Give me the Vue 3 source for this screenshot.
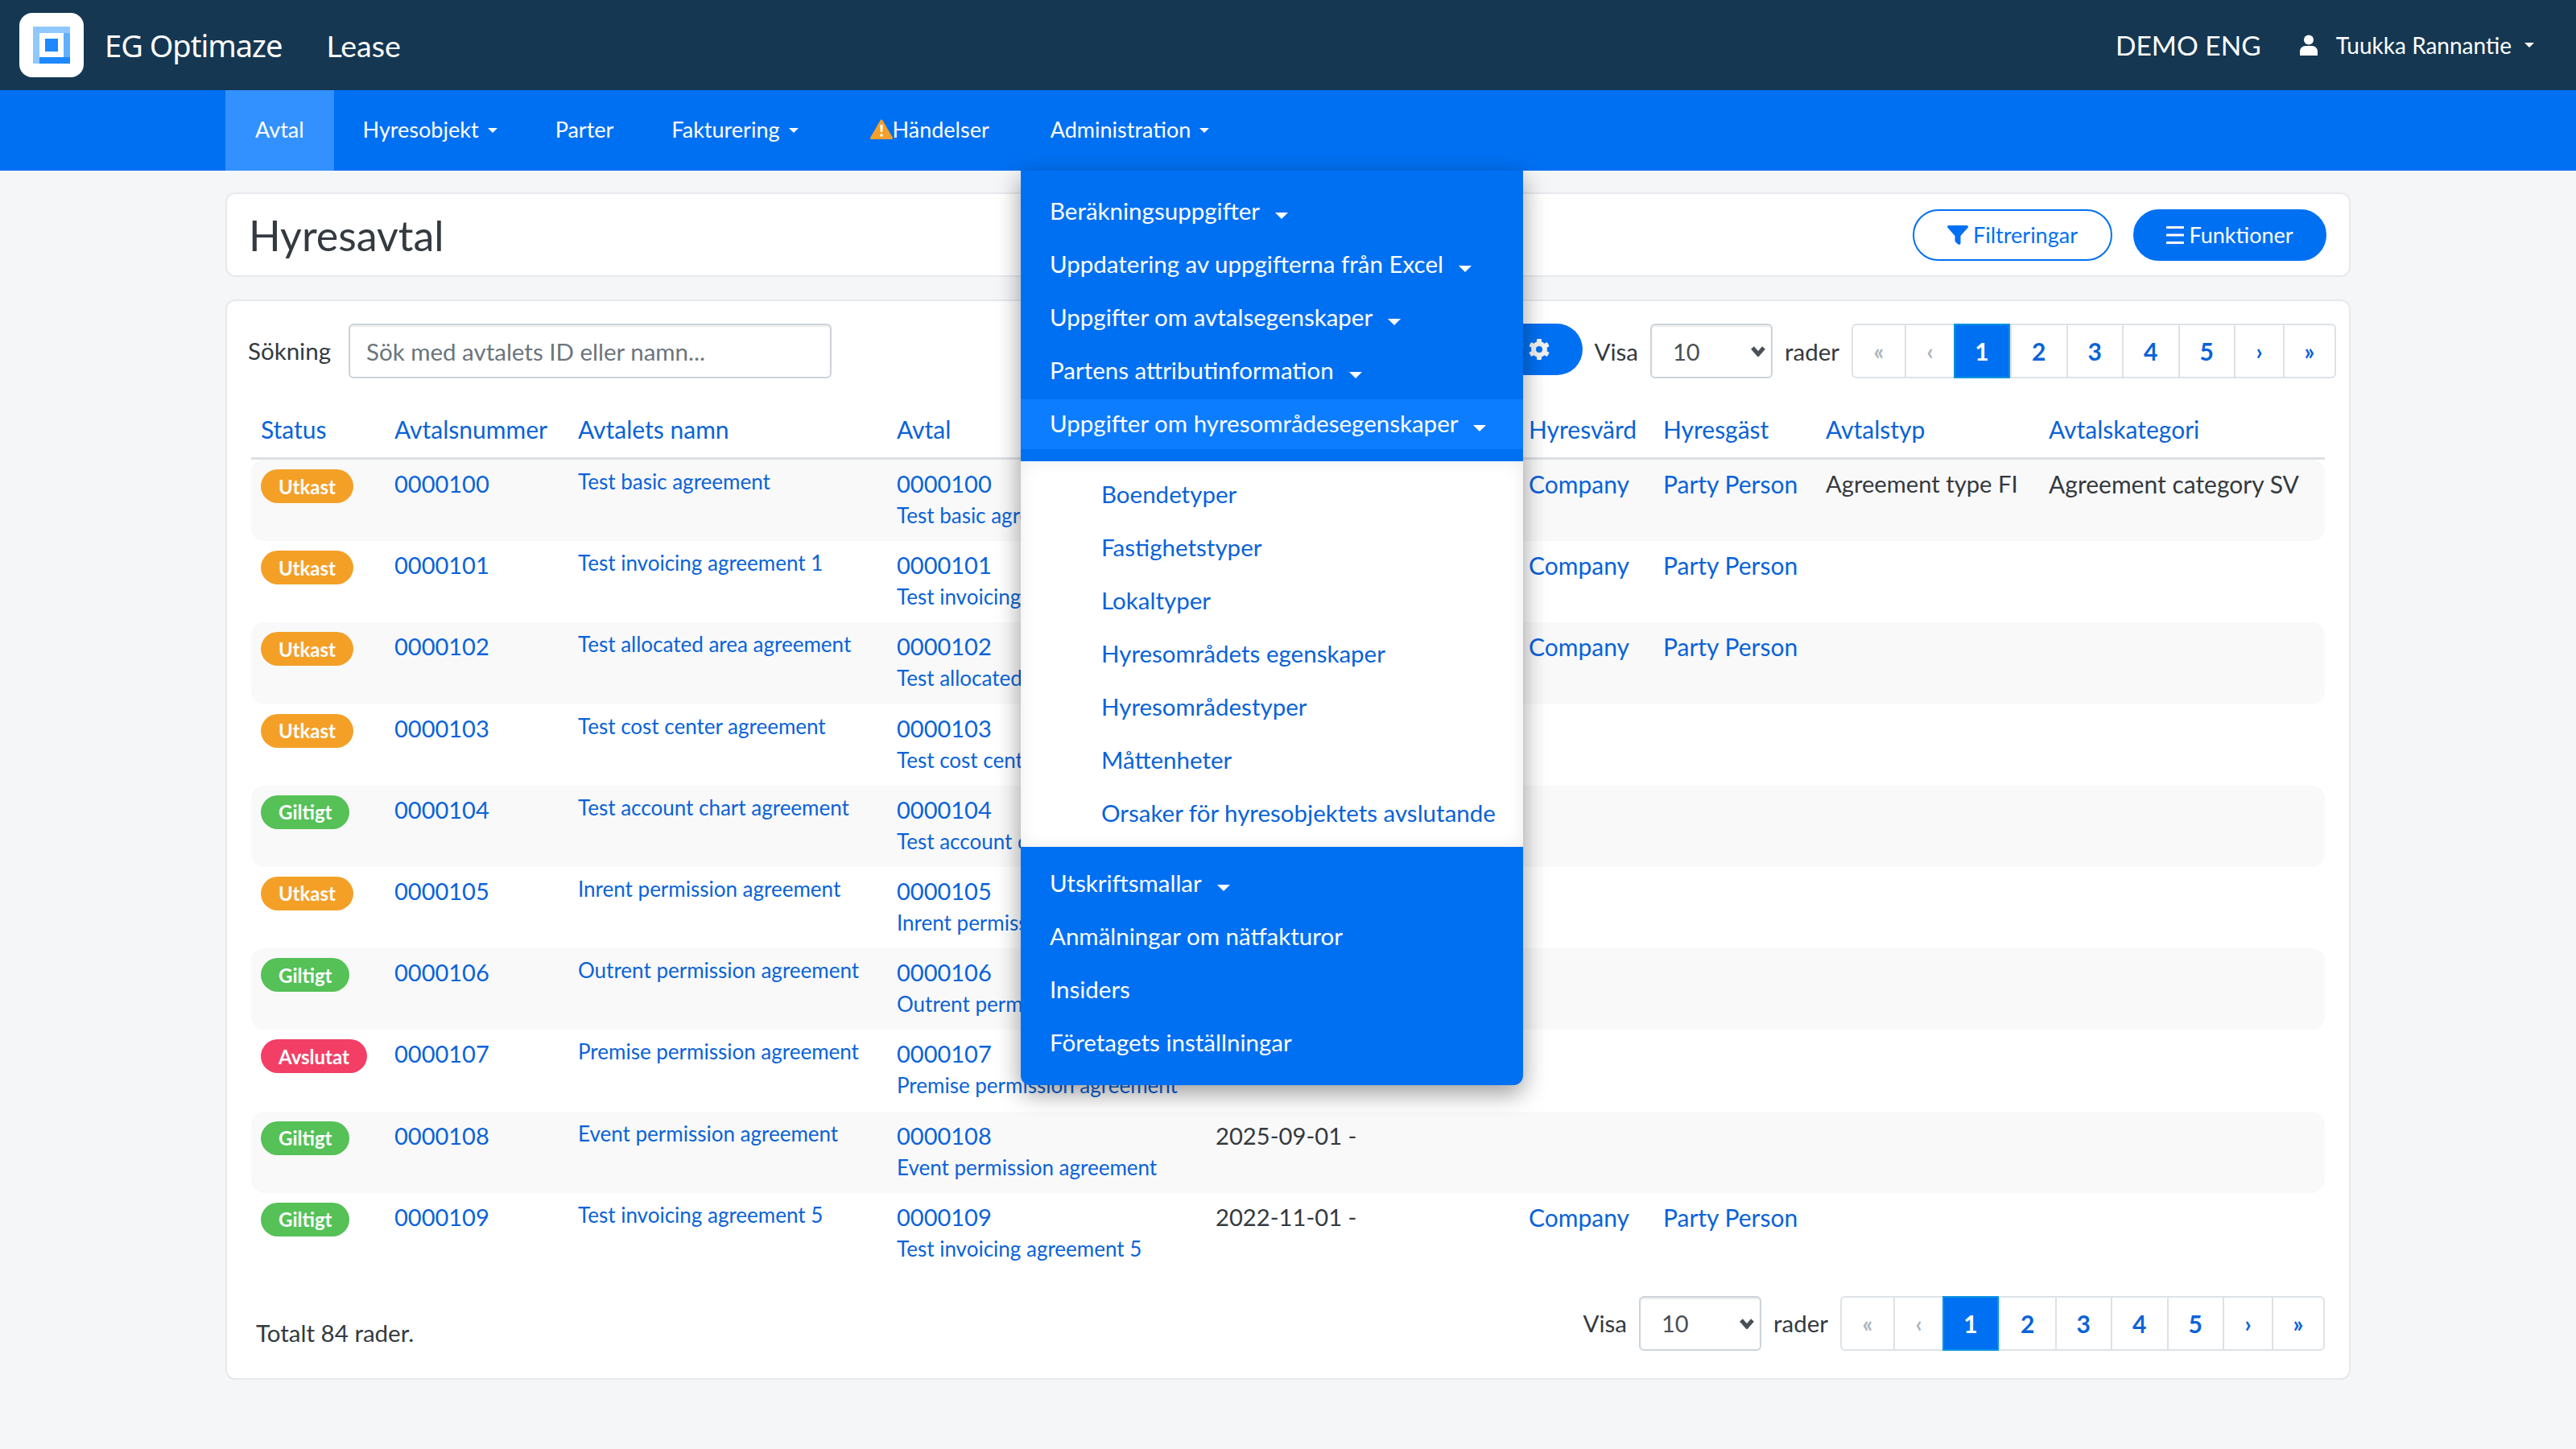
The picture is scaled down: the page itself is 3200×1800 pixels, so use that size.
<script setup>
const navItems = [
  { label: 'Avtal', active: true },
  { label: 'Hyresobjekt', caret: true },
  { label: 'Parter' },
  { label: 'Fakturering', caret: true },
  { label: 'Händelser', warn: true },
  { label: 'Administration', caret: true }
]

const adminTop = [
  'Beräkningsuppgifter',
  'Uppdatering av uppgifterna från Excel',
  'Uppgifter om avtalsegenskaper',
  'Partens attributinformation'
]
const subItems = [
  'Boendetyper',
  'Fastighetstyper',
  'Lokaltyper',
  'Hyresområdets egenskaper',
  'Hyresområdestyper',
  'Måttenheter',
  'Orsaker för hyresobjektets avslutande'
]

const rows = [
  { status: 'Utkast', no: '0000100', name: 'Test basic agreement', company: true, type: 'Agreement type FI', cat: 'Agreement category SV' },
  { status: 'Utkast', no: '0000101', name: 'Test invoicing agreement 1', company: true },
  { status: 'Utkast', no: '0000102', name: 'Test allocated area agreement', company: true },
  { status: 'Utkast', no: '0000103', name: 'Test cost center agreement' },
  { status: 'Giltigt', no: '0000104', name: 'Test account chart agreement' },
  { status: 'Utkast', no: '0000105', name: 'Inrent permission agreement' },
  { status: 'Giltigt', no: '0000106', name: 'Outrent permission agreement' },
  { status: 'Avslutat', no: '0000107', name: 'Premise permission agreement' },
  { status: 'Giltigt', no: '0000108', name: 'Event permission agreement', date: '2025-09-01 -' },
  { status: 'Giltigt', no: '0000109', name: 'Test invoicing agreement 5', date: '2022-11-01 -', company: true }
]

const pages = ['«', '‹', '1', '2', '3', '4', '5', '›', '»']
</script>

<template>
  <div class="page">
    <header class="topbar">
      <div class="logo">
        <svg width="48" height="48" viewBox="0 0 48 48">
          <rect x="1" y="1" width="46" height="46" fill="#8fc7ff" />
          <rect x="9" y="9" width="30" height="30" fill="#fff" />
          <rect x="39" y="9" width="8" height="30" fill="#5fb0ff" />
          <rect x="9" y="39" width="38" height="8" fill="#1e88ff" />
          <rect x="16" y="16" width="16" height="16" fill="#1e88ff" />
        </svg>
      </div>
      <span class="brand">EG Optimaze</span>
      <span class="module">Lease</span>
      <span class="tenant">DEMO ENG</span>
      <svg class="user-icon" width="24" height="26" viewBox="0 0 24 26">
        <circle cx="12" cy="6.500" r="6" fill="#fff" />
        <path d="M1 26v-5c0-4 3-7 7-7h8c4 0 7 3 7 7v5z" fill="#fff" />
      </svg>
      <span class="user">Tuukka Rannantie</span>
      <i class="caret small user-caret"></i>
    </header>

    <nav class="navbar">
      <a v-for="item in navItems" :key="item.label" class="nav-item" :class="{ active: item.active, warned: item.warn }">
        <svg v-if="item.warn" width="28" height="25" viewBox="0 0 28 25">
          <path d="M14 2 L26.500 23.500 H1.500 Z" fill="#f4a02a" stroke="#f4a02a" stroke-width="3" stroke-linejoin="round" />
          <path d="M12.300 7h3.400l-.5 9h-2.400z" fill="#fff" />
          <circle cx="14" cy="20" r="1.800" fill="#fff" />
        </svg>
        {{ item.label }}
        <i v-if="item.caret" class="caret small"></i>
      </a>
    </nav>

    <main class="content">
      <section class="card title-card">
        <h1>Hyresavtal</h1>
        <div class="title-actions">
          <button class="pill outline">
            <svg width="26" height="24" viewBox="0 0 26 24">
              <path d="M2 0h22c1.800 0 2.500 1.800 1.400 3L16.500 13v9c0 1.600-1.800 2.500-3 1.500l-3-2.500c-.6-.5-1-1.200-1-2v-6L.6 3C-.5 1.800.2 0 2 0z" fill="#0070f2" />
            </svg>
            Filtreringar
          </button>
          <button class="pill solid">
            <svg width="22" height="22" viewBox="0 0 22 22">
              <path d="M1 1.500h20M1 11h20M1 20.500h20" stroke="#fff" stroke-width="3" stroke-linecap="round" />
            </svg>
            Funktioner
          </button>
        </div>
      </section>

      <section class="card list-card">
        <div class="toolbar">
          <label class="search-label">Sökning</label>
          <input class="search" placeholder="Sök med avtalets ID eller namn..." />
          <button class="gear-btn">
            <svg width="26" height="26" viewBox="0 0 26 26">
              <circle cx="13" cy="13" r="7" fill="none" stroke="#f2f2f2" stroke-width="6" />
              <g fill="#f2f2f2">
                <rect x="10" y="0" width="6" height="6" rx="1" />
                <rect x="10" y="0" width="6" height="6" rx="1" transform="rotate(60 13 13)" />
                <rect x="10" y="0" width="6" height="6" rx="1" transform="rotate(120 13 13)" />
                <rect x="10" y="0" width="6" height="6" rx="1" transform="rotate(180 13 13)" />
                <rect x="10" y="0" width="6" height="6" rx="1" transform="rotate(240 13 13)" />
                <rect x="10" y="0" width="6" height="6" rx="1" transform="rotate(300 13 13)" />
              </g>
            </svg>
          </button>
          <span class="rows-label">Visa</span>
          <select class="rows-select"><option>10</option></select>
          <span class="rows-label">rader</span>
          <ul class="pager">
            <li v-for="(p, i) in pages" :key="i" :class="{ on: p === '1', off: i < 2, outer: i === 0 || i === 8, inner: i === 1 || i === 7 }">{{ p }}</li>
          </ul>
        </div>

        <table class="grid">
          <colgroup>
            <col style="width: 166px" /><col style="width: 228px" /><col style="width: 396px" /><col style="width: 396px" />
            <col style="width: 389px" /><col style="width: 167px" /><col style="width: 202px" /><col style="width: 277px" /><col />
          </colgroup>
          <thead>
            <tr>
              <th>Status</th><th>Avtalsnummer</th><th>Avtalets namn</th><th>Avtal</th><th></th>
              <th>Hyresvärd</th><th>Hyresgäst</th><th>Avtalstyp</th><th>Avtalskategori</th>
            </tr>
          </thead>
          <tbody>
            <tr v-for="row in rows" :key="row.no">
              <td><span class="badge" :class="row.status.toLowerCase()">{{ row.status }}</span></td>
              <td><a class="num">{{ row.no }}</a></td>
              <td><a class="name">{{ row.name }}</a></td>
              <td class="contract">
                <a class="num">{{ row.no }}</a>
                <a class="name sub">{{ row.name }}</a>
              </td>
              <td class="plain">{{ row.date }}</td>
              <td><a v-if="row.company" class="party">Company</a></td>
              <td><a v-if="row.company" class="party">Party Person</a></td>
              <td class="plain">{{ row.type }}</td>
              <td class="plain wide">{{ row.cat }}</td>
            </tr>
          </tbody>
        </table>

        <div class="list-foot">
          <span class="total">Totalt 84 rader.</span>
          <div class="foot-right">
            <span class="rows-label">Visa</span>
            <select class="rows-select"><option>10</option></select>
            <span class="rows-label">rader</span>
            <ul class="pager">
              <li v-for="(p, i) in pages" :key="i" :class="{ on: p === '1', off: i < 2, outer: i === 0 || i === 8, inner: i === 1 || i === 7 }">{{ p }}</li>
            </ul>
          </div>
        </div>
      </section>
    </main>

    <div class="admin-menu">
      <a v-for="m in adminTop" :key="m" class="menu-item">{{ m }}<i class="caret"></i></a>
      <a class="menu-item open">Uppgifter om hyresområdesegenskaper<i class="caret"></i></a>
      <div class="submenu">
        <a v-for="s in subItems" :key="s" class="sub-item">{{ s }}</a>
      </div>
      <a class="menu-item">Utskriftsmallar<i class="caret"></i></a>
      <a class="menu-item">Anmälningar om nätfakturor</a>
      <a class="menu-item">Insiders</a>
      <a class="menu-item">Företagets inställningar</a>
    </div>
  </div>
</template>

<style>
html, body {
  margin: 0;
  background: #f5f6f8;
}
</style>

<style scoped>
.page {
  position: relative;
  width: 3200px;
  height: 1800px;
  background: #f5f6f8;
  font-family: "Lato", "Open Sans", sans-serif;
  font-size: 29.5px;
  color: #343a40;
  overflow: hidden;
}

.topbar {
  display: flex;
  align-items: center;
  height: 112px;
  padding: 0 52px 0 24px;
  background: #153752;
  color: #fff;
}
.logo {
  display: flex;
  align-items: center;
  justify-content: center;
  width: 80px;
  height: 80px;
  border-radius: 16px;
  background: #fff;
}
.brand {
  margin-left: 26px;
  font-family: "Noto Sans", sans-serif;
  font-size: 38px;
  letter-spacing: -1px;
}
.module {
  margin-left: 55px;
  font-size: 37.500px;
}
.tenant {
  margin-left: auto;
  font-size: 33.500px;
}
.user-icon {
  margin-left: 47px;
}
.user {
  margin-left: 22px;
  font-size: 28px;
}

.caret {
  display: inline-block;
  width: 0;
  height: 0;
  margin-left: 19px;
  vertical-align: 1px;
  border-left: 8px solid transparent;
  border-right: 8px solid transparent;
  border-top: 8px solid #fff;
}
.caret.small {
  margin-left: 11px;
  border-left-width: 6px;
  border-right-width: 6px;
  border-top-width: 6px;
}
.caret.user-caret {
  margin-left: 16px;
}

.navbar {
  display: flex;
  height: 100px;
  padding-left: 280px;
  background: #0070f2;
}
.nav-item {
  display: flex;
  align-items: center;
  padding: 0 36px 3px;
  color: #fff;
  font-size: 27px;
}
.nav-item .caret {
  margin-top: 2px;
}
.nav-item.active {
  padding: 0 37px 3px;
  background: #3391ff;
}
.nav-item.warned {
  margin-left: 17px;
  margin-right: 4px;
}

.content {
  display: flex;
  flex-direction: column;
  gap: 28px;
  width: 2640px;
  margin: 27px 0 0 280px;
}
.card {
  background: #fff;
  border: 2px solid #e8e9ec;
  border-radius: 12px;
  box-sizing: border-box;
}
.title-card {
  display: flex;
  align-items: center;
  justify-content: space-between;
  height: 105px;
  padding: 0 28px 0 27px;
}
h1 {
  margin: 0;
  font-size: 52px;
  font-weight: 400;
  color: #343a40;
}
.title-actions {
  display: flex;
  gap: 26px;
}
.pill {
  display: flex;
  align-items: center;
  justify-content: center;
  gap: 6px;
  height: 64px;
  border-radius: 32px;
  font-family: inherit;
  font-size: 27px;
  box-sizing: border-box;
}
.pill.outline {
  width: 248px;
  background: #fff;
  border: 2px solid #0070f2;
  color: #0070f2;
}
.pill.solid {
  width: 240px;
  background: #0070f2;
  border: 2px solid #0070f2;
  color: #fff;
}

.list-card {
  height: 1342px;
  padding: 28px 30px 0;
}
.toolbar {
  display: flex;
  align-items: center;
  height: 68px;
  margin-right: -14px;
}
.search-label {
  margin-left: -4px;
  margin-right: 22px;
  margin-bottom: 2px;
}
.search {
  width: 600px;
  height: 68px;
  padding: 0 20px;
  border: 2px solid #ced4da;
  border-radius: 6px;
  box-sizing: border-box;
  font-family: inherit;
  font-size: 29.5px;
  box-shadow: inset 0 2px 2px rgba(0, 0, 0, 0.08);
}
.search::placeholder {
  color: #6c757d;
}
.gear-btn {
  display: flex;
  align-items: center;
  justify-content: flex-end;
  width: 150px;
  height: 64px;
  margin: 0 15px 4px auto;
  padding: 0 41px 0 0;
  border: 0;
  border-radius: 0 32px 32px 0;
  background: #0070f2;
}
.rows-label {
  white-space: nowrap;
}
.rows-select {
  width: 152px;
  height: 68px;
  margin: 0 15px;
  padding-left: 26px;
  border: 2px solid #ced4da;
  border-radius: 6px;
  background: #fff url("data:image/svg+xml,%3Csvg xmlns='http://www.w3.org/2000/svg' width='20' height='14' viewBox='0 0 20 14'%3E%3Cpath d='M3 3l7 8 7-8' fill='none' stroke='%23495057' stroke-width='5'/%3E%3C/svg%3E") no-repeat right 6px center;
  color: #495057;
  font-family: inherit;
  font-size: 29px;
  appearance: none;
  box-shadow: inset 0 2px 2px rgba(0, 0, 0, 0.08);
}
.pager {
  display: flex;
  margin: 0 0 0 15px;
  padding: 0;
  list-style: none;
  border: 2px solid #dee2e6;
  border-radius: 6px;
  height: 68px;
  box-sizing: border-box;
  background: #fff;
}
.pager li {
  display: flex;
  align-items: center;
  justify-content: center;
  width: 69.500px;
  border-left: 2px solid #dee2e6;
  box-sizing: border-box;
  color: #0a63d8;
  font-weight: 700;
  font-size: 30px;
}
.pager li:first-child {
  border-left: 0;
}
.pager li.outer {
  width: 64px;
  font-size: 28px;
}
.pager li.inner {
  width: 61px;
  font-size: 28px;
}
.pager li.off {
  color: #adb5bd;
}
.pager li.on {
  width: 70px;
  margin: -2px 0;
  border: 2px solid #0a94e0;
  background: #0070f2;
  color: #fff;
}

.grid {
  width: 100%;
  margin-top: 28px;
  border-collapse: separate;
  border-spacing: 0;
  table-layout: fixed;
}
.grid th {
  height: 70px;
  padding: 0 12px;
  border-bottom: 3px solid #dcdfe3;
  color: #0a63d8;
  font-size: 30px;
  font-weight: 400;
  text-align: left;
  vertical-align: middle;
}
.grid td {
  height: 101.200px;
  padding: 12px 12px 0;
  vertical-align: top;
  box-sizing: border-box;
  white-space: nowrap;
}
.grid tbody tr:nth-child(odd) td {
  background: #f9f9f9;
}
.grid tbody tr:nth-child(odd) td:first-child {
  border-radius: 16px 0 0 16px;
}
.grid tbody tr:nth-child(odd) td:last-child {
  border-radius: 0 16px 16px 0;
}
.num {
  display: block;
  color: #0a63d8;
  font-size: 29px;
  line-height: 36px;
}
.party {
  display: block;
  color: #0a63d8;
  font-size: 30px;
  line-height: 36px;
}
.name {
  display: block;
  color: #0a63d8;
  font-size: 26px;
  line-height: 30px;
}
.sub {
  margin-top: 6px;
}
.plain {
  font-size: 29.200px;
  line-height: 36px;
}
.plain.wide {
  font-size: 30px;
}
.badge {
  display: inline-flex;
  align-items: center;
  height: 42px;
  padding: 0 22px;
  border-radius: 21px;
  color: #fff;
  font-size: 24px;
  font-weight: 700;
  box-sizing: border-box;
}
.utkast { background: #f4a027; }
.giltigt { background: #55c157; }
.avslutat { background: #f33f66; }

.list-foot {
  display: flex;
  align-items: center;
  justify-content: space-between;
  margin-top: 27px;
  padding: 0 0 0 6px;
}
.total {
  margin-top: 24px;
}
.foot-right {
  display: flex;
  align-items: center;
}

.admin-menu {
  position: absolute;
  top: 212px;
  left: 1268px;
  width: 624px;
  height: 1136px;
  padding: 20px 0 0;
  box-sizing: border-box;
  background: #0070f2;
  border-radius: 0 0 12px 12px;
  box-shadow: 0 10px 30px rgba(0, 0, 0, 0.4);
}
.menu-item {
  display: block;
  height: 62px;
  margin-bottom: 4px;
  padding: 0 36px;
  color: #fff;
  font-size: 29.500px;
  line-height: 60px;
  white-space: nowrap;
}
.menu-item.open {
  margin-bottom: 15px;
  background: #0d7dff;
}
.submenu {
  height: 479px;
  margin-bottom: 15px;
  padding-top: 10px;
  box-sizing: border-box;
  background: #fff;
  box-shadow: inset 0 0 20px rgba(0, 0, 0, 0.08);
}
.sub-item {
  display: block;
  height: 62px;
  margin-bottom: 4px;
  padding-left: 100px;
  color: #0a63d8;
  font-size: 29.500px;
  line-height: 62px;
  white-space: nowrap;
}
</style>
